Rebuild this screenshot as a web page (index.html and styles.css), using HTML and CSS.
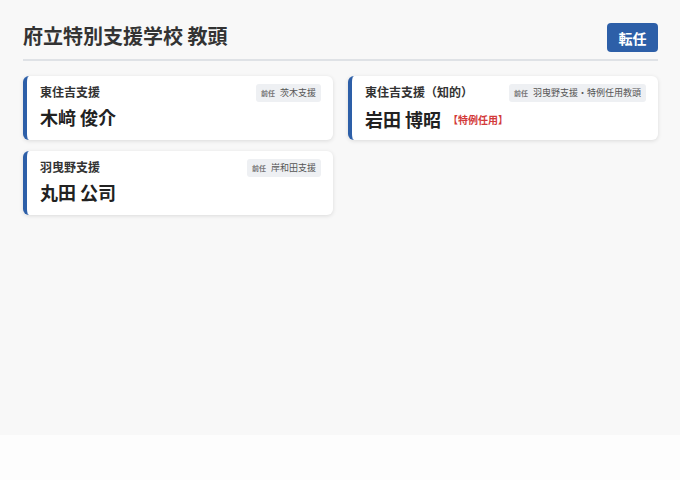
FILE: index.html
```html
<!DOCTYPE html>
<html lang="ja">
<head>
<meta charset="utf-8">
<link rel="stylesheet" href="styles.css">
</head>
<body>
<div class="page">
  <header class="header">
    <h1 class="title">府立特別支援学校 教頭</h1>
    <button class="btn">転任</button>
  </header>
  <div class="grid">
    <div class="card">
      <div class="row">
        <span class="school">東住吉支援</span>
        <span class="badge"><span class="badge-label">前任</span>茨木支援</span>
      </div>
      <div class="name">木﨑 俊介</div>
    </div>
    <div class="card">
      <div class="row">
        <span class="school">東住吉支援（知的）</span>
        <span class="badge"><span class="badge-label">前任</span>羽曳野支援・特例任用教頭</span>
      </div>
      <div class="name">岩田 博昭<span class="tag">【特例任用】</span></div>
    </div>
    <div class="card">
      <div class="row">
        <span class="school">羽曳野支援</span>
        <span class="badge"><span class="badge-label">前任</span>岸和田支援</span>
      </div>
      <div class="name">丸田 公司</div>
    </div>
  </div>
</div>
</body>
</html>
```

FILE: styles.css
```css
* { box-sizing: border-box; }
html, body { margin: 0; padding: 0; background: #fdfdfd; }
body { font-family: "Noto Sans CJK JP", "Noto Sans", sans-serif; color: #222; }
.page {
  background: #f8f8f8;
  height: 435px;
  padding: 23px 22px 0 23px;
}
.header {
  display: flex;
  align-items: flex-start;
  justify-content: space-between;
  padding-bottom: 7px;
  border-bottom: 2px solid #dfe2e6;
  margin-bottom: 15px;
}
.title {
  margin: 0;
  font-size: 20px;
  font-weight: 700;
  color: #333;
  line-height: 25px;
}
.btn {
  font-family: inherit;
  background: #2d5fa8;
  color: #fff;
  border: none;
  border-radius: 4px;
  height: 29px;
  width: 51px;
  font-size: 14px;
  font-weight: 700;
  padding: 0;
}
.grid {
  display: grid;
  grid-template-columns: 1fr 1fr;
  gap: 11px 15px;
}
.card {
  background: #fff;
  border-left: 4px solid #2d5fa8;
  border-radius: 6px;
  box-shadow: 0 1px 4px rgba(0,0,0,0.12);
  padding: 8px 12px 10px 13px;
  height: 64px;
}
.row {
  display: flex;
  justify-content: space-between;
  align-items: center;
  height: 18px;
}
.school {
  font-size: 12px;
  font-weight: 700;
  color: #333;
  line-height: 14px;
  margin-top: -3px;
}
.badge {
  background: #eef0f3;
  border-radius: 3px;
  font-size: 9px;
  color: #555;
  padding: 0 5px;
  height: 18px;
  line-height: 18px;
  display: inline-flex;
  align-items: center;
}
.badge-label {
  font-size: 7px;
  font-weight: 700;
  color: #777;
  margin-right: 5px;
}
.name {
  margin-top: 3px;
  font-size: 18px;
  font-weight: 700;
  color: #222;
  line-height: 24px;
  display: flex;
  align-items: center;
}
.tag {
  font-size: 10px;
  color: #d33a3a;
  font-weight: 700;
  margin-left: 7px;
  margin-top: 3px;
}
```
